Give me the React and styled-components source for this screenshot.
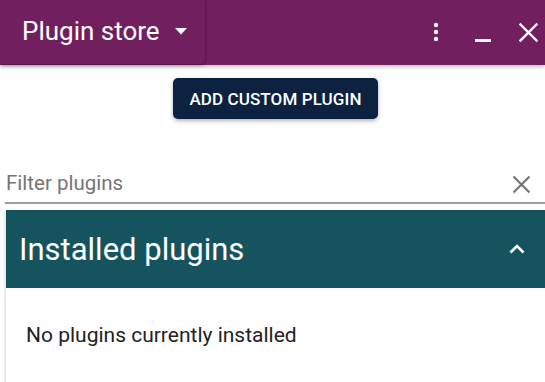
import React from "react";
import styled, { createGlobalStyle } from "styled-components";

const Global = createGlobalStyle`
  html, body { margin: 0; padding: 0; background: #fff; }
  body { font-family: Roboto, "Liberation Sans", sans-serif; width: 545px; height: 382px; overflow: hidden; }
`;

const Page = styled.div`
  display: flex;
  flex-direction: column;
  width: 545px;
  height: 382px;
`;

const Header = styled.header`
  display: flex;
  align-items: flex-start;
  height: 66px;
  background: #721f5f;
  box-shadow: 0 2px 4px rgba(0, 0, 0, 0.25);
  position: relative;
  z-index: 1;
`;

const StoreButton = styled.button`
  display: flex;
  align-items: center;
  gap: 15px;
  width: 206px;
  height: 65px;
  padding: 0 0 2px 22px;
  box-sizing: border-box;
  background: #721f5f;
  border: 1px solid rgba(0, 0, 0, 0.18);
  border-top: none;
  border-left: none;
  border-radius: 0 0 6px 0;
  box-shadow: 0 1px 3px rgba(0, 0, 0, 0.2);
  color: #fff;
  font-family: Roboto, sans-serif;
  font-size: 26px;
  font-weight: 400;
  cursor: pointer;
`;

const Spacer = styled.div`
  flex: 1;
`;

const IconButton = styled.button`
  display: flex;
  align-items: center;
  justify-content: center;
  width: ${(p) => p.$w}px;
  height: 64px;
  padding: 0;
  background: none;
  border: none;
  color: #fff;
`;

const Main = styled.main`
  display: flex;
  flex-direction: column;
  padding: 13px 0 0 6px;
`;

const AddRow = styled.div`
  display: flex;
  justify-content: center;
  padding-right: 4px;
`;

const AddButton = styled.button`
  height: 41px;
  padding: 0 16px;
  background: #0d2240;
  color: #fff;
  border: none;
  border-radius: 5px;
  box-shadow: 0 2px 4px rgba(0, 0, 0, 0.3);
  font-family: Roboto, sans-serif;
  font-size: 17px;
  font-weight: 500;
  letter-spacing: 0.1px;
  margin-left: 4px;
`;

const FilterRow = styled.div`
  display: flex;
  align-items: center;
  margin-top: 47px;
  height: 36px;
  border-bottom: 2px solid #9e9e9e;
  margin-left: -1px;
`;

const FilterInput = styled.input`
  flex: 1;
  border: none;
  outline: none;
  background: none;
  padding: 0 0 3px 1px;
  font-family: Roboto, sans-serif;
  font-size: 20.5px;
  color: #333;
  &::placeholder { color: #757575; }
`;

const ClearButton = styled.button`
  display: flex;
  align-items: center;
  justify-content: center;
  width: 36px;
  height: 30px;
  margin-right: 6px;
  padding: 0;
  background: none;
  border: none;
  color: #757575;
`;

const Panel = styled.section`
  margin-top: 6px;
  display: flex;
  flex-direction: column;
  box-shadow: -1px 1px 3px rgba(0, 0, 0, 0.15);
  flex: 1;
`;

const PanelHeader = styled.div`
  display: flex;
  align-items: center;
  justify-content: space-between;
  height: 78px;
  padding: 0 20px 0 13px;
  background: #15545f;
  color: #fff;
  font-size: 31px;
  font-weight: 400;
`;

const PanelBody = styled.div`
  padding: 35px 20px 40px 20px;
  font-size: 21px;
  color: #222;
`;

export default function App() {
  return (
    <Page>
      <Global />
      <Header>
        <StoreButton>
          Plugin store
          <svg width="12" height="7" viewBox="0 0 12 7"><path d="M0 0h12L6 6.5z" fill="#fff" /></svg>
        </StoreButton>
        <Spacer />
        <IconButton $w={34}>
          <svg width="6" height="20" viewBox="0 0 6 20" fill="#fff">
            <circle cx="3" cy="3" r="2.2" />
            <circle cx="3" cy="10" r="2.2" />
            <circle cx="3" cy="17" r="2.2" />
          </svg>
        </IconButton>
        <IconButton $w={59}>
          <svg width="18" height="20" viewBox="0 0 18 20">
            <rect x="1" y="17" width="16" height="3" fill="#fff" />
          </svg>
        </IconButton>
        <IconButton $w={33}>
          <svg width="19" height="19" viewBox="0 0 19 19" stroke="#fff" strokeWidth="2.4" strokeLinecap="square">
            <path d="M1.5 1.5l16 16M17.5 1.5l-16 16" />
          </svg>
        </IconButton>
      </Header>
      <Main>
        <AddRow>
          <AddButton>ADD CUSTOM PLUGIN</AddButton>
        </AddRow>
        <FilterRow>
          <FilterInput placeholder="Filter plugins" />
          <ClearButton>
            <svg width="19" height="19" viewBox="0 0 19 19" stroke="#757575" strokeWidth="2.2">
              <path d="M1.5 1.5l16 16M17.5 1.5l-16 16" />
            </svg>
          </ClearButton>
        </FilterRow>
        <Panel>
          <PanelHeader>
            Installed plugins
            <svg width="16" height="10" viewBox="0 0 16 10" fill="none" stroke="#fff" strokeWidth="2.6">
              <path d="M1.5 8.5L8 2l6.5 6.5" />
            </svg>
          </PanelHeader>
          <PanelBody>No plugins currently installed</PanelBody>
        </Panel>
      </Main>
    </Page>
  );
}
